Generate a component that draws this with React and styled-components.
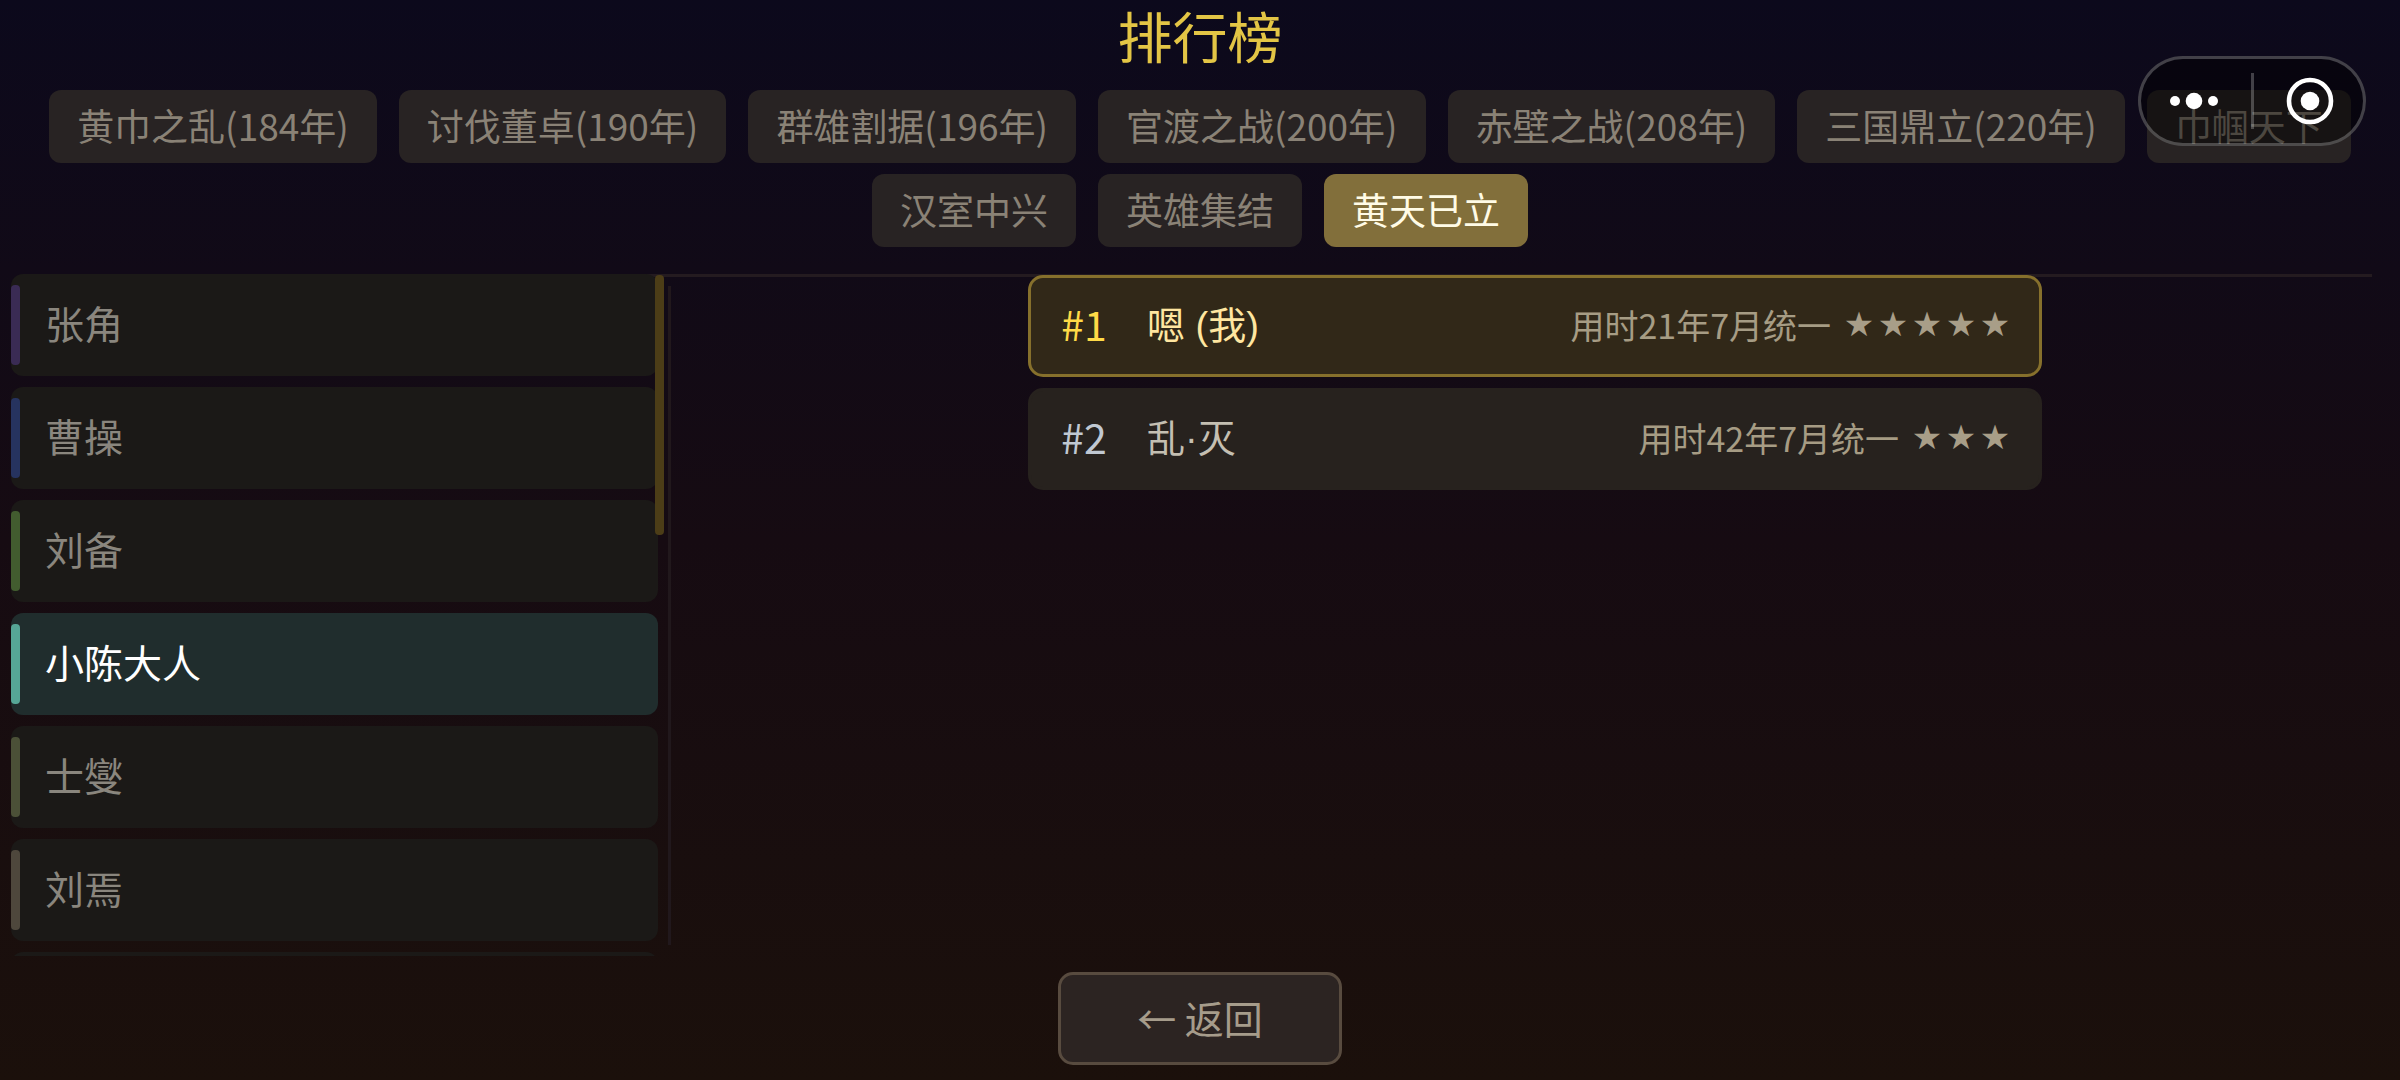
import React, { useState } from 'react'

import styled, { createGlobalStyle } from "styled-components";

const scenarios = [
  '黄巾之乱(184年)',
  '讨伐董卓(190年)',
  '群雄割据(196年)',
  '官渡之战(200年)',
  '赤壁之战(208年)',
  '三国鼎立(220年)',
  '巾帼天下',
  '汉室中兴',
  '英雄集结',
  '黄天已立',
]

const lords = [
  { name: '张角', color: '#3a2b54' },
  { name: '曹操', color: '#26335f' },
  { name: '刘备', color: '#425c2f' },
  { name: '小陈大人', color: '#56a696' },
  { name: '士燮', color: '#4b5037' },
  { name: '刘焉', color: '#4e473c' },
  { name: '', color: '#4e473c' },
]

const ranks = [
  { name: '嗯 (我)', time: '用时21年7月统一', stars: 5, mine: true },
  { name: '乱·灭', time: '用时42年7月统一', stars: 3, mine: false },
]

function App() {
  const [scenario, setScenario] = useState('黄天已立');
  const [lord, setLord] = useState('小陈大人');

  return (
    <Page>
      <GlobalStyle />
      <Header>
        <Title>排行榜</Title>
        <Tabs>
          {scenarios.map((name) => (
            <Tab key={name} $active={name === scenario} onClick={() => setScenario(name)}>
              {name}
            </Tab>
          ))}
        </Tabs>
      </Header>

      <Body>
        <Side>
          <LordBox>
            <LordList>
              {lords.map(({ name, color }) => (
                <Lord key={name} $active={name === lord} onClick={() => setLord(name)}>
                  <Mark $color={color} />
                  <LordName>{name}</LordName>
                </Lord>
              ))}
            </LordList>
            <ScrollThumb />
          </LordBox>
          <Divider />
        </Side>

        <RankList>
          {ranks.map((rank, i) => (
            <Rank key={rank.name} $mine={rank.mine}>
              <Place $first={i === 0}>#{i + 1}</Place>
              <Name $mine={rank.mine}>{rank.name}</Name>
              <Result>
                {rank.time}
                <Stars>
                  {Array.from({ length: rank.stars }, (_, n) => <Star key={n}>★</Star>)}
                </Stars>
              </Result>
            </Rank>
          ))}
        </RankList>
      </Body>

      <Footer>
        <BackButton>← 返回</BackButton>
      </Footer>

      <Capsule>
        <CapsuleButton aria-label="更多">
          <svg width="48" height="18" viewBox="0 0 48 18" fill="#fff">
            <circle cx="5" cy="9" r="5" />
            <circle cx="24" cy="9" r="8.3" />
            <circle cx="43" cy="9" r="5" />
          </svg>
        </CapsuleButton>
        <CapsuleLine />
        <CapsuleButton aria-label="关闭">
          <svg width="48" height="48" viewBox="0 0 48 48">
            <circle cx="24" cy="24" r="21" fill="none" stroke="#fff" strokeWidth="4.6" />
            <circle cx="24" cy="24" r="9.3" fill="#fff" />
          </svg>
        </CapsuleButton>
      </Capsule>
    </Page>
  )
}

export default App

const GlobalStyle = createGlobalStyle`
  * {
    box-sizing: border-box;
  }
  body {
    margin: 0;
    background: #1b0f0c;
  }
  button {
    margin: 0;
    border: none;
    font-family: inherit;
    cursor: pointer;
  }
`
const Page = styled.div`
  position: relative;
  display: flex;
  flex-direction: column;
  height: 100vh;
  overflow: hidden;
  font-family: "Noto Sans CJK SC", sans-serif;
  background: linear-gradient(180deg, #0c091c 0%, #160b12 50%, #1b100b 100%);
`
const Header = styled.header`
  margin: 0 28px;
  padding-bottom: 27px;
  border-bottom: 3px solid #241b20;
`
const Title = styled.h1`
  margin: 0 0 12px;
  font-family: "Liberation Sans", "Noto Sans CJK SC", sans-serif;
  font-size: 55px;
  line-height: 78px;
  font-weight: 400;
  text-align: center;
  color: #e3c545;
`
const Tabs = styled.nav`
  display: flex;
  flex-wrap: wrap;
  justify-content: center;
  gap: 11px 22px;
`
const Tab = styled.button`
  height: 73px;
  padding: 0 28px 2px;
  border-radius: 12px;
  font-size: 37px;
  line-height: 71px;
  color: ${(props) => props.$active ? '#fffbe6' : '#8a8276'};
  background: ${(props) => props.$active ? '#826f3b' : '#282323'};
`
const Body = styled.main`
  flex: 1;
  display: flex;
  min-height: 0;
  margin-top: -3px;
`
const Side = styled.aside`
  display: flex;
  flex: none;
  width: 28%;
  padding: 0 1px 0 11px;
`
const LordBox = styled.div`
  position: relative;
  flex: 1;
  margin-right: 10px;
`
const LordList = styled.div`
  display: flex;
  flex-direction: column;
  gap: 11px;
  height: 100%;
  overflow: hidden;
`
const Lord = styled.button`
  display: flex;
  flex: none;
  align-items: center;
  gap: 25px;
  height: 102px;
  padding: 0;
  border-radius: 12px;
  font-size: 39px;
  color: ${(props) => props.$active ? '#fff' : '#8a867e'};
  background: ${(props) => props.$active ? '#202d2d' : '#1b1917'};
`
const Mark = styled.span`
  width: 9px;
  height: 80px;
  border-radius: 4px;
  background: ${(props) => props.$color};
`
const LordName = styled.span`
  padding-bottom: 6px;
`
const ScrollThumb = styled.div`
  position: absolute;
  top: 1px;
  right: -6px;
  width: 9px;
  height: 260px;
  border-radius: 4px;
  background: #4c3d17;
`
const Divider = styled.div`
  width: 3px;
  margin: 12px 0 11px;
  background: #21181c;
`
const RankList = styled.ol`
  flex: 1;
  display: flex;
  flex-direction: column;
  align-items: center;
  gap: 11px;
  margin: 0;
  padding: 1px 2px 0 0;
  list-style: none;
`
const Rank = styled.li`
  display: flex;
  align-items: center;
  width: 100%;
  max-width: 1014px;
  height: 102px;
  padding: 0 27px 4px 25px;
  border: 3px solid ${(props) => props.$mine ? '#86702c' : '#27221e'};
  border-radius: 15px;
  background: ${(props) => props.$mine ? '#312818' : '#27221e'};
`
const Place = styled.span`
  width: 56px;
  margin-right: 35px;
  padding-bottom: 3px;
  font-size: 41px;
  text-align: center;
  color: ${(props) => props.$first ? '#ffda47' : '#c0c8d2'};
`
const Name = styled.span`
  flex: 1;
  padding-bottom: 3px;
  font-family: "Liberation Sans", "Noto Sans CJK SC", sans-serif;
  font-size: 38px;
  color: ${(props) => props.$mine ? '#ffe6a0' : '#c4bfb2'};
`
const Result = styled.span`
  display: flex;
  align-items: center;
  gap: 11px;
  font-size: 34px;
  color: #a69c84;
`
const Stars = styled.span`
  display: flex;
  color: #a89e88;
`
const Star = styled.span`
  width: 34px;
  font-family: "DejaVu Sans", sans-serif;
  text-align: center;
`
const Footer = styled.footer`
  display: flex;
  justify-content: center;
  padding: 16px 0 15px;
`
const BackButton = styled.button`
  width: 284px;
  height: 93px;
  padding: 0 0 4px;
  border: 3px solid #584b3f;
  border-radius: 15px;
  font-size: 39px;
  color: #a69c8b;
  background: #2c2422;
`
const Capsule = styled.div`
  position: absolute;
  top: 56px;
  right: 34px;
  display: flex;
  align-items: center;
  width: 228px;
  height: 90px;
  border: 3px solid rgba(255, 255, 255, 0.24);
  border-radius: 45px;
  background: rgba(0, 0, 0, 0.45);
`
const CapsuleButton = styled.button`
  flex: 1;
  display: flex;
  align-items: center;
  justify-content: center;
  padding: 0;
  background: none;

  &:first-child {
    padding-right: 4px;
  }
  &:last-child {
    padding-left: 4px;
  }
`
const CapsuleLine = styled.span`
  width: 3px;
  height: 56px;
  background: rgba(255, 255, 255, 0.24);
`
